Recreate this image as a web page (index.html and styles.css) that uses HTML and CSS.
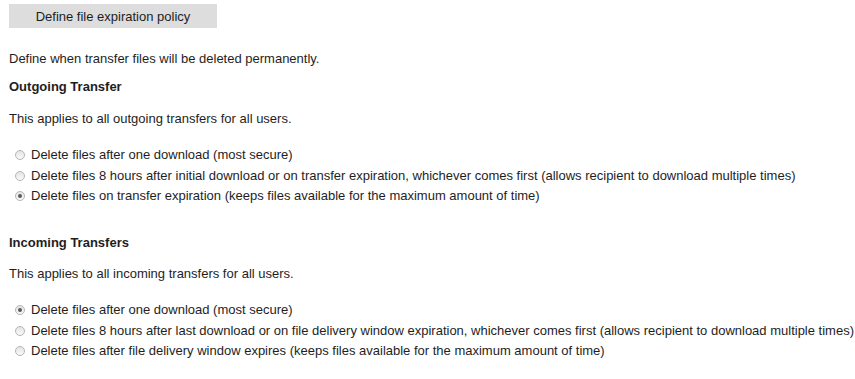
FILE: index.html
```html
<!DOCTYPE html>
<html lang="en">
<head>
  <meta charset="UTF-8">
  <title>File expiration policy</title>
  <link rel="stylesheet" href="styles.css">
</head>
<body>

  <button class="boton-politica">Define file expiration policy</button>

  <p class="intro">Define when transfer files will be deleted permanently.</p>

  <div class="seccion">
    <h3>Outgoing Transfer</h3>
    <p class="nota">This applies to all outgoing transfers for all users.</p>
    <ul class="opciones">
      <li><label><input type="radio" name="salida"> Delete files after one download (most secure)</label></li>
      <li><label><input type="radio" name="salida"> Delete files 8 hours after initial download or on transfer expiration, whichever comes first (allows recipient to download multiple times)</label></li>
      <li><label><input type="radio" name="salida" checked> Delete files on transfer expiration (keeps files available for the maximum amount of time)</label></li>
    </ul>
  </div>

  <div class="seccion segunda">
    <h3>Incoming Transfers</h3>
    <p class="nota">This applies to all incoming transfers for all users.</p>
    <ul class="opciones">
      <li><label><input type="radio" name="entrada" checked> Delete files after one download (most secure)</label></li>
      <li><label><input type="radio" name="entrada"> Delete files 8 hours after last download or on file delivery window expiration, whichever comes first (allows recipient to download multiple times)</label></li>
      <li><label><input type="radio" name="entrada"> Delete files after file delivery window expires (keeps files available for the maximum amount of time)</label></li>
    </ul>
  </div>

</body>
</html>
```

FILE: styles.css
```css
body {
  margin: 0;
  padding: 4px 9px 0;
  font-family: "Liberation Sans", Arial, sans-serif;
  font-size: 13px;
  line-height: 20px;
  color: #1e1e1e;
  background: #ffffff;
}

.boton-politica {
  display: block;
  width: 208px;
  height: 24px;
  padding: 0;
  border: none;
  background: #dddddd;
  font-family: inherit;
  font-size: 13px;
  color: #1e1e1e;
}

.intro {
  margin: 21px 0 0;
}

h3 {
  margin: 8px 0 0;
  font-size: 13px;
  font-weight: bold;
}

.segunda h3 {
  margin-top: 26.5px;
}

.nota {
  margin: 12px 0 0;
}

.segunda .nota {
  margin-top: 11px;
}

.opciones {
  list-style: none;
  margin: 16px 0 0;
  padding: 0 0 0 6px;
}

.opciones li {
  height: 20.5px;
  line-height: 20.5px;
}

.opciones label {
  display: flex;
  align-items: center;
  gap: 6px;
  white-space: nowrap;
}

input[type="radio"] {
  appearance: none;
  -webkit-appearance: none;
  width: 10px;
  height: 10px;
  margin: 0;
  border: 1px solid #b5b5b5;
  border-radius: 50%;
  background: linear-gradient(#e4e4e4, #fafafa);
  box-sizing: border-box;
  flex-shrink: 0;
  position: relative;
}

input[type="radio"]:checked::after {
  content: "";
  position: absolute;
  left: 2px;
  top: 2px;
  width: 4px;
  height: 4px;
  border-radius: 50%;
  background: #5a5a5a;
}
```
